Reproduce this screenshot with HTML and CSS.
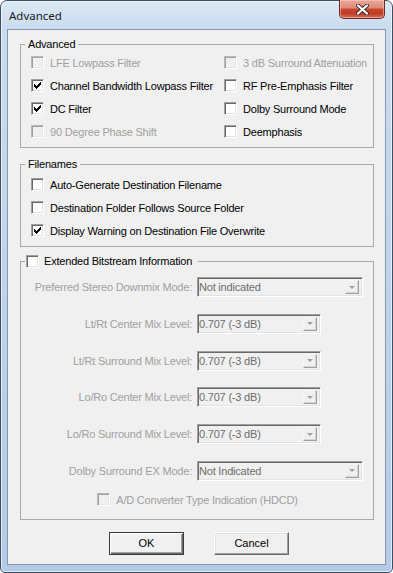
FILE: index.html
```html
<!DOCTYPE html>
<html lang="en">
<head>
  <meta charset="UTF-8" />
  <title>Advanced</title>
  <link rel="stylesheet" href="styles.css">
</head>
<body>

<div class="window">
  <div class="titlebar">
    <span class="title">Advanced</span>
    <button class="close" aria-label="Close">
      <svg width="13" height="11" viewBox="0 0 13 11">
        <path d="M2 1.5 L11 9.5 M11 1.5 L2 9.5" stroke="#3b2a28" stroke-width="4" stroke-linecap="round"/>
        <path d="M2 1.5 L11 9.5 M11 1.5 L2 9.5" stroke="#fff" stroke-width="2.2" stroke-linecap="round"/>
      </svg>
    </button>
  </div>

  <div class="client">
    <fieldset class="group advanced">
      <legend>Advanced</legend>
      <div class="options">
        <label class="check disabled"><span class="box"></span>LFE Lowpass Filter</label>
        <label class="check disabled"><span class="box"></span>3 dB Surround Attenuation</label>
        <label class="check"><span class="box"><svg class="tick" width="11" height="11" viewBox="0 0 11 11"><path d="M2 4h1v3h-1z M3 5h1v3h-1z M4 6h1v3h-1z M5 5h1v3h-1z M6 4h1v3h-1z M7 3h1v3h-1z M8 2h1v3h-1z"/></svg></span>Channel Bandwidth Lowpass Filter</label>
        <label class="check"><span class="box"></span>RF Pre-Emphasis Filter</label>
        <label class="check"><span class="box"><svg class="tick" width="11" height="11" viewBox="0 0 11 11"><path d="M2 4h1v3h-1z M3 5h1v3h-1z M4 6h1v3h-1z M5 5h1v3h-1z M6 4h1v3h-1z M7 3h1v3h-1z M8 2h1v3h-1z"/></svg></span>DC Filter</label>
        <label class="check"><span class="box"></span>Dolby Surround Mode</label>
        <label class="check disabled"><span class="box"></span>90 Degree Phase Shift</label>
        <label class="check"><span class="box"></span>Deemphasis</label>
      </div>
    </fieldset>

    <fieldset class="group files">
      <legend>Filenames</legend>
      <div class="options single">
        <label class="check"><span class="box"></span>Auto-Generate Destination Filename</label>
        <label class="check"><span class="box"></span>Destination Folder Follows Source Folder</label>
        <label class="check"><span class="box"><svg class="tick" width="11" height="11" viewBox="0 0 11 11"><path d="M2 4h1v3h-1z M3 5h1v3h-1z M4 6h1v3h-1z M5 5h1v3h-1z M6 4h1v3h-1z M7 3h1v3h-1z M8 2h1v3h-1z"/></svg></span>Display Warning on Destination File Overwrite</label>
      </div>
    </fieldset>

    <fieldset class="group ext">
      <legend><label class="check"><span class="box"></span>Extended Bitstream Information</label></legend>
      <div class="form">
        <span class="field-label">Preferred Stereo Downmix Mode:</span>
        <div class="combo wide"><span>Not indicated</span><span class="drop"></span></div>

        <span class="field-label">Lt/Rt Center Mix Level:</span>
        <div class="combo narrow"><span>0.707 (-3 dB)</span><span class="drop"></span></div>

        <span class="field-label">Lt/Rt Surround Mix Level:</span>
        <div class="combo narrow"><span>0.707 (-3 dB)</span><span class="drop"></span></div>

        <span class="field-label">Lo/Ro Center Mix Level:</span>
        <div class="combo narrow"><span>0.707 (-3 dB)</span><span class="drop"></span></div>

        <span class="field-label">Lo/Ro Surround Mix Level:</span>
        <div class="combo narrow"><span>0.707 (-3 dB)</span><span class="drop"></span></div>

        <span class="field-label">Dolby Surround EX Mode:</span>
        <div class="combo wide"><span>Not Indicated</span><span class="drop"></span></div>
      </div>
      <div class="hdcd">
        <label class="check disabled"><span class="box"></span>A/D Converter Type Indication (HDCD)</label>
      </div>
    </fieldset>

    <div class="buttons">
      <button class="btn default">OK</button>
      <button class="btn">Cancel</button>
    </div>
  </div>
</div>

</body>
</html>
```

FILE: styles.css
```css
html, body {
  margin: 0;
  background: #fff;
}

body {
  font-family: "Liberation Sans", Arial, sans-serif;
  font-size: 11px;
  letter-spacing: -0.2px;
  color: #000;
}

.window {
  width: 393px;
  height: 573px;
  box-sizing: border-box;
  display: flex;
  flex-direction: column;
  padding: 0 6px 7px;
  border: 1px solid #3f4f62;
  border-radius: 7px 7px 5px 5px;
  background: linear-gradient(to bottom, #dce9f6 0, #c9dbef 28px, #bcd2ea 60%, #b3cbe6 100%);
  box-shadow: inset 0 0 0 1px rgba(255, 255, 255, 0.6);
}

.titlebar {
  height: 28px;
  flex: none;
  display: flex;
  align-items: center;
  justify-content: space-between;
  padding-left: 2px;
}

.title {
  font-family: "Noto Sans", "Open Sans", sans-serif;
  font-size: 11.5px;
  letter-spacing: 0;
  color: #1b1b1b;
  padding-top: 1px;
}

.close {
  align-self: flex-start;
  width: 46px;
  height: 19px;
  margin: -1px 1px 0 0;
  padding: 0;
  border: 1px solid #6b2b22;
  border-top: none;
  border-radius: 0 0 5px 5px;
  background: linear-gradient(to bottom, #e9a89a 0, #dd8a78 45%, #c7452d 50%, #c13c25 75%, #d6705a 100%);
  box-shadow: inset 0 0 0 1px rgba(255, 210, 200, 0.5);
  display: flex;
  align-items: center;
  justify-content: center;
}

.close svg {
  display: block;
}

.client {
  flex: 1;
  background: #f0f0f0;
  border: 1px solid #8597ad;
  padding: 7px 11px 0 12px;
}

/* group boxes */
.group {
  margin: 0;
  padding: 0;
  min-width: 0;
  border: 1px solid #a9a9a9;
}

.group legend {
  margin-left: 4px;
  padding: 0 3px;
  line-height: 14px;
}

.files {
  margin-top: 9px;
}

.ext {
  margin-top: 7px;
}

.ext legend {
  padding: 0 6px 0 1px;
}

.options {
  display: grid;
  grid-template-columns: 193px 1fr;
  grid-auto-rows: 23px;
  padding: 0 0 4px 10px;
}

.options.single {
  grid-template-columns: 1fr;
  padding-top: 2px;
}

.check {
  display: flex;
  align-items: center;
  white-space: nowrap;
}

.check.disabled {
  color: #a0a0a0;
}

.box {
  width: 13px;
  height: 13px;
  flex: none;
  box-sizing: border-box;
  margin-right: 6px;
  border: 1px solid;
  border-color: #a0a0a0 #fff #fff #a0a0a0;
  background: #fff;
  box-shadow: inset 1px 1px 0 #696969, inset -1px -1px 0 #e3e3e3;
}

.disabled .box {
  background: #f0f0f0;
  border-color: #b9b9b9 #fff #fff #b9b9b9;
  box-shadow: inset 1px 1px 0 #a0a0a0, inset -1px -1px 0 #e8e8e8;
}

.ext legend .box {
  margin-right: 5px;
}

.tick {
  display: block;
  fill: #000;
}

/* extended bitstream form */
.form {
  display: grid;
  grid-template-columns: 171px 1fr;
  grid-auto-rows: 20px;
  column-gap: 5px;
  row-gap: 16.8px;
  padding-top: 9px;
  align-items: center;
}

.field-label {
  text-align: right;
  color: #a0a0a0;
  white-space: nowrap;
}

.combo {
  height: 20px;
  box-sizing: border-box;
  display: flex;
  align-items: center;
  padding-left: 1px;
  border: 1px solid;
  border-color: #a0a0a0 #fff #fff #a0a0a0;
  box-shadow: inset 1px 1px 0 #696969, inset -1px -1px 0 #e3e3e3;
  background: #f0f0f0;
  color: #6d6d6d;
}

.combo.wide {
  width: 166px;
}

.combo.narrow {
  width: 124px;
}

.drop {
  margin-left: auto;
  margin-right: 3px;
  width: 14px;
  height: 14px;
  box-sizing: border-box;
  border: 1px solid;
  border-color: #f4f4f4 #a0a0a0 #a0a0a0 #f4f4f4;
  box-shadow: inset -1px -1px 0 #d4d4d4;
  display: flex;
  align-items: center;
  justify-content: center;
}

.drop::after {
  content: "";
  border-top: 3px solid #a0a0a0;
  border-left: 3px solid transparent;
  border-right: 3px solid transparent;
}

.hdcd {
  display: flex;
  justify-content: center;
  height: 14px;
  margin-top: 12px;
  padding: 0 0 12px 1px;
}

/* dialog buttons */
.buttons {
  display: flex;
  justify-content: center;
  gap: 30px;
  margin-top: 12px;
  padding-left: 4px;
}

.btn {
  width: 75px;
  height: 23px;
  padding: 0;
  font: inherit;
  color: #000;
  background: #f0f0f0;
  border: 1px solid;
  border-color: #fff #696969 #696969 #fff;
  box-shadow: inset -1px -1px 0 #a0a0a0, inset 1px 1px 0 #e3e3e3;
}

.btn.default {
  border-color: #3a3a3a;
  box-shadow: inset 1px 1px 0 #fff, inset -1px -1px 0 #696969, inset -2px -2px 0 #a0a0a0;
}
```
